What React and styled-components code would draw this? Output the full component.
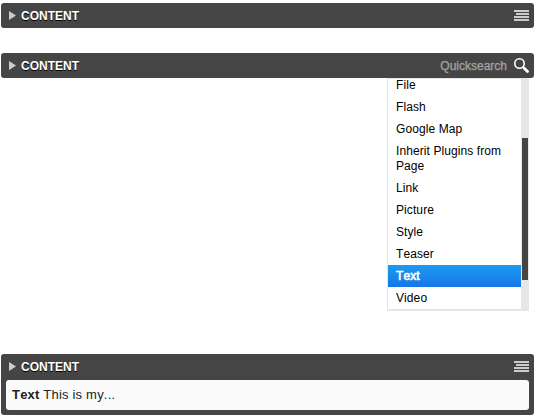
import React from "react";
import styled, { createGlobalStyle, css } from "styled-components";

const GlobalStyle = createGlobalStyle`
  *, *::before, *::after { box-sizing: border-box; }
  body {
    margin: 0;
    background: #fff;
    font-family: "Liberation Sans", Arial, Helvetica, sans-serif;
    font-size: 12px;
    line-height: 15px;
  }
`;

const Page = styled.main`
  width: 544px;
  height: 417px;
  padding: 3px 10px 0 1px;
  overflow: hidden;
`;

const Placeholder = styled.section`
  position: relative;
  height: ${(p) => p.$height}px;
  margin-bottom: ${(p) => p.$gap || 0}px;
  background: #454545;
  border-radius: 3px;
`;

const Header = styled.header`
  display: flex;
  align-items: center;
  height: 25px;
  padding: 0 5px 0 8px;
`;

const Arrow = styled.span`
  width: 7px;
  height: 9px;
  margin-right: 5px;
  background: #ccc;
  clip-path: polygon(0 0, 100% 50%, 0 100%);
`;

const Title = styled.h2`
  flex: 1;
  margin: 0;
  padding-top: 2px;
  font-size: 12px;
  line-height: 15px;
  font-weight: bold;
  font-kerning: none;
  color: #fff;
  text-shadow: 0 1px 0 #000;
`;

const Search = styled.label`
  display: flex;
  align-items: center;
  gap: 7px;
  color: #a6a6a6;
  font-kerning: none;
`;

const SearchText = styled.span`
  padding-top: 2px;
  -webkit-text-stroke: 0.25px #a6a6a6;
`;

const Menu = styled.div`
  position: absolute;
  top: 25px;
  left: 386px;
  display: flex;
  width: 142px;
  height: 233px;
  border: solid #e6e6e6;
  border-width: 1px 0 2px 1px;
  background: #fff;
`;

const List = styled.ul`
  flex: 1;
  display: flex;
  flex-direction: column;
  justify-content: flex-end;
  margin: 0;
  padding: 0;
  list-style: none;
  overflow: hidden;
`;

const Item = styled.li`
  flex: none;
  padding: 4px 8px 3px;
  color: #000;
  font-kerning: none;
  letter-spacing: 0.09px;
  ${(p) =>
    p.$active &&
    css`
      color: #fff;
      background: linear-gradient(#1c9bef, #1676e8);
      -webkit-text-stroke: 0.6px #fff;
    `}
`;

const Track = styled.div`
  width: 8px;
  padding: 59px 1px 0;
  background: #e6e6e6;
`;

const Thumb = styled.div`
  height: 142px;
  background: #454545;
`;

const Plugin = styled.div`
  height: 30px;
  margin: 1px 5px 0;
  padding: 7px 6px;
  border-radius: 3px;
  background: #fafafa;
  color: #222;
  font-size: 13px;
  line-height: 16px;
  font-kerning: none;
  letter-spacing: 0.2px;
`;

const MenuIcon = () => (
  <svg width="15" height="11" viewBox="0 0 15 11" fill="#ccc" shapeRendering="crispEdges">
    <path d="M0 0h15v2H0zM2 3h13v2H2zM0 6h15v2H0zM0 9h15v2H0z" />
  </svg>
);

const SearchIcon = () => (
  <svg width="15" height="15" viewBox="0 0 15 15" fill="none" stroke="#fff">
    <circle cx="5.5" cy="5.5" r="4.7" strokeWidth="1.6" />
    <path d="M8.8 8.8l1.7 1.7" strokeWidth="1.8" />
    <path d="M10.5 10.5l3 3" strokeWidth="2.8" strokeLinecap="round" />
  </svg>
);

const plugins = ["File", "Flash", "Google Map", "Inherit Plugins from Page", "Link", "Picture", "Style", "Teaser", "Text", "Video"];

const Bar = ({ children }) => (
  <Header>
    <Arrow />
    <Title>CONTENT</Title>
    {children}
  </Header>
);

export default function App() {
  return (
    <>
      <GlobalStyle />
      <Page>
        <Placeholder $height={25} $gap={25}>
          <Bar><MenuIcon /></Bar>
        </Placeholder>
        <Placeholder $height={25} $gap={276}>
          <Bar>
            <Search><SearchText>Quicksearch</SearchText><SearchIcon /></Search>
          </Bar>
          <Menu>
            <List>
              {plugins.map((name) => (
                <Item key={name} $active={name === "Text"}>{name}</Item>
              ))}
            </List>
            <Track><Thumb /></Track>
          </Menu>
        </Placeholder>
        <Placeholder $height={61}>
          <Bar><MenuIcon /></Bar>
          <Plugin><b>Text</b> This is my...</Plugin>
        </Placeholder>
      </Page>
    </>
  );
}
